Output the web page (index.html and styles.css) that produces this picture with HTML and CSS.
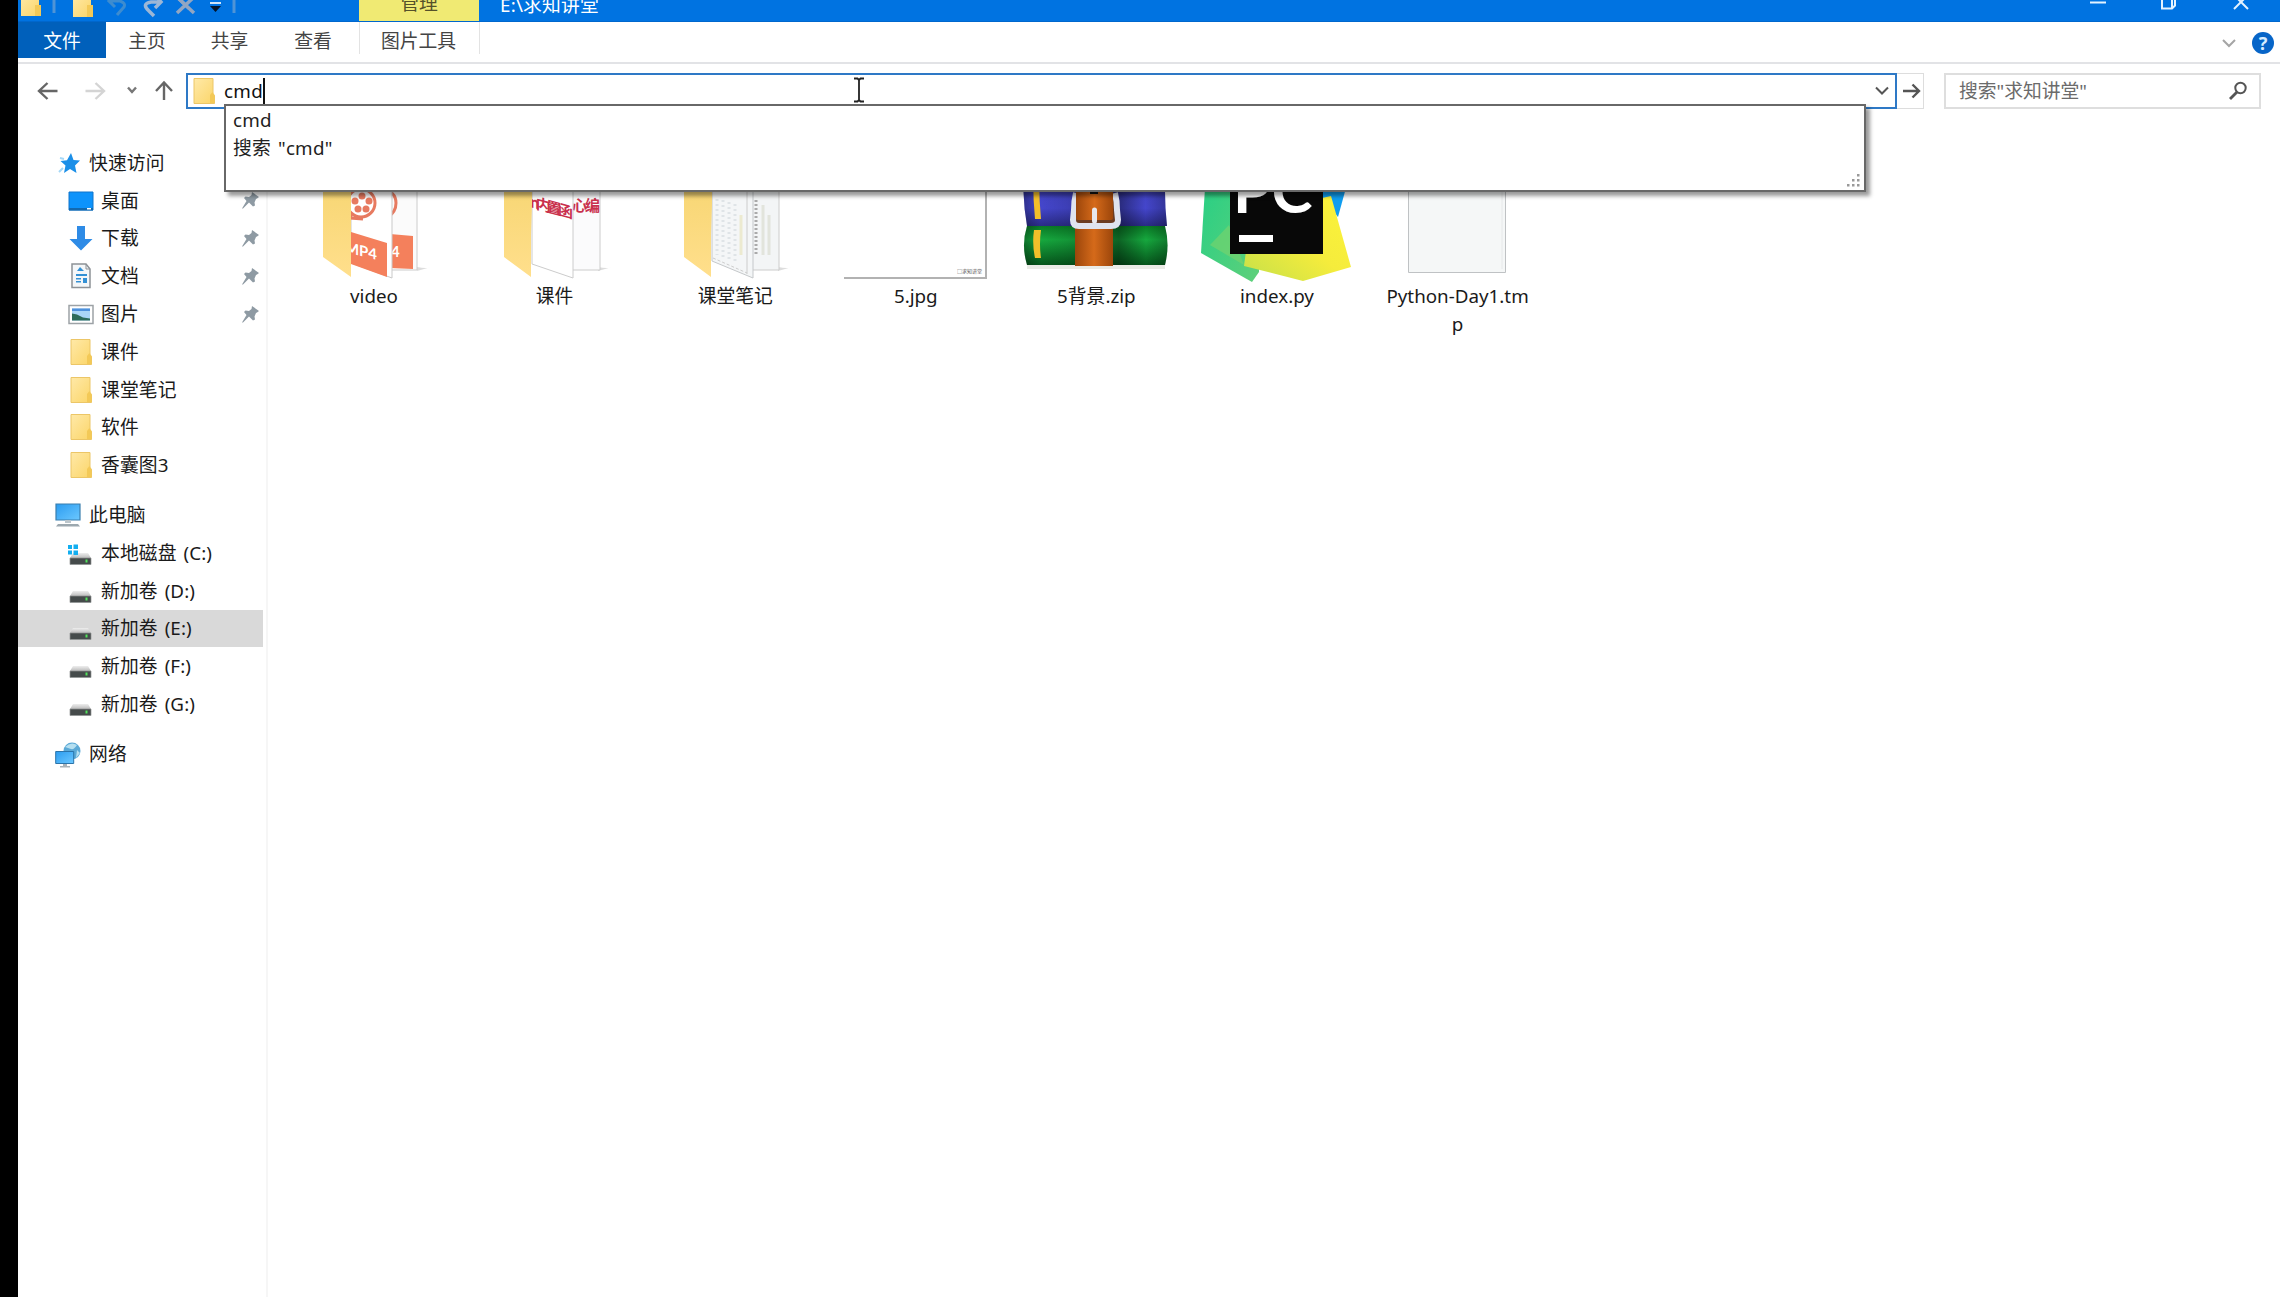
FILE: index.html
```html
<!DOCTYPE html>
<html lang="zh-CN">
<head>
<meta charset="utf-8">
<title>E:\求知讲堂</title>
<link rel="stylesheet" href="styles.css">
</head>
<body>
<svg class="defs" width="0" height="0">
  <defs>
    <linearGradient id="gf" x1="0" x2="1" y1="0" y2="1"><stop offset="0" stop-color="#ffe9a8"/><stop offset="1" stop-color="#fbd568"/></linearGradient>
    <linearGradient id="gcover" x1="0" x2="0" y1="0" y2="1"><stop offset="0" stop-color="#f5d36c"/><stop offset="1" stop-color="#ffdf8c"/></linearGradient>
    <linearGradient id="gscreen" x1="0" x2="1" y1="0" y2="1"><stop offset="0" stop-color="#2b9cf0"/><stop offset="1" stop-color="#6cc8ff"/></linearGradient>
    <linearGradient id="gblue" x1="0" x2="0" y1="0" y2="1"><stop offset="0" stop-color="#4142b8"/><stop offset=".75" stop-color="#4446cc"/><stop offset="1" stop-color="#2a2b86"/></linearGradient>
    <linearGradient id="ggreen" x1="0" x2="0" y1="0" y2="1"><stop offset="0" stop-color="#0a7a26"/><stop offset=".35" stop-color="#16a83e"/><stop offset="1" stop-color="#06561c"/></linearGradient>
    <linearGradient id="gstrap" x1="0" x2="1" y1="0" y2="0"><stop offset="0" stop-color="#9c460b"/><stop offset=".5" stop-color="#d56a1a"/><stop offset="1" stop-color="#9c460b"/></linearGradient>
    <linearGradient id="gshade" x1="0" x2="1" y1="0" y2="0"><stop offset="0" stop-color="#000" stop-opacity=".3"/><stop offset=".12" stop-color="#000" stop-opacity="0"/><stop offset=".3" stop-color="#000" stop-opacity=".1"/><stop offset=".66" stop-color="#000" stop-opacity=".4"/><stop offset=".85" stop-color="#000" stop-opacity="0"/><stop offset="1" stop-color="#000" stop-opacity=".25"/></linearGradient>
    <linearGradient id="gpyg" x1="0" x2="1" y1="0" y2="1"><stop offset="0" stop-color="#21cf86"/><stop offset="1" stop-color="#5fd07a"/></linearGradient>
    <linearGradient id="gpyy" x1="0" x2="1" y1="1" y2="0"><stop offset="0" stop-color="#c5e04a"/><stop offset=".5" stop-color="#f5ec3c"/><stop offset="1" stop-color="#fcf33a"/></linearGradient>
    <linearGradient id="gdrive" x1="0" x2="0" y1="0" y2="1"><stop offset="0" stop-color="#eee"/><stop offset="1" stop-color="#bbb"/></linearGradient>
    <symbol id="folder" viewBox="0 0 22 26"><path d="M1 .5h19v15l1.500 2v8H1z" fill="url(#gf)" stroke="#ecc667"/><path d="M17 25v-8l2-2.500h1l1.500 3v7.500z" fill="#f3c957"/></symbol>
    <symbol id="pin" viewBox="0 0 17 17"><path d="M10 0l7 5-2 1.500-1 .5-1.500 3.500.5 3-2 1L7 10.500 1 16.500H0L4.500 9 2 6l1.500-1.500L7 5l2.500-2z" fill="#8e9aa3"/></symbol>
    <symbol id="drive" viewBox="0 0 26 26"><path d="M5 13h15l3 5H2z" fill="url(#gdrive)"/><path d="M2 18h21v6.500H2z" fill="#454b4b" stroke="#8f9393" stroke-width=".7"/><path d="M17.500 19.500h2v3h-2z" fill="#51e35b"/></symbol>
  </defs>
</svg>
<div class="window">
  <header class="titlebar">
    <div class="quick">
      <svg width="170" height="22" viewBox="0 0 170 22">
        <path d="M3-5h18v21H3z" fill="url(#gf)"/><path d="M17 5h6v11h-6z" fill="#f3c957"/>
        <path d="M36 0v13" stroke="#4f94d6" stroke-width="3"/>
        <path d="M55-5h18v22H55z" fill="url(#gf)"/><path d="M69 5h6v12h-6z" fill="#f3c957"/>
        <path d="M92 1h10q6 2 4 6l-7 8M97-4l-6 5 6 6" stroke="#3d8ccf" stroke-width="3" fill="none"/>
        <path d="M143 2h-10q-10 2-2 9l5 5M138-4l5 6-6 6" stroke="#9cb7d6" stroke-width="3.500" fill="none"/>
        <path d="M159-3l17 16" stroke="#92a6c2" stroke-width="3.500"/>
      </svg>
      <svg class="quick-more" width="60" height="22" viewBox="0 0 60 22">
        <path d="M-11-3L6 13M6-3l-17 16" stroke="#92a6c2" stroke-width="3.500"/>
        <path d="M22 3h11" stroke="#cfe4f7" stroke-width="2"/><path d="M22 6h11l-5.500 6z" fill="#051629"/>
        <path d="M46 0v13" stroke="#4f94d6" stroke-width="3"/>
      </svg>
    </div>
    <div class="manage"><span>管理</span></div>
    <div class="title"><span>E:\求知讲堂</span></div>
    <svg class="controls" width="180" height="22" viewBox="0 0 180 22" fill="none" stroke="#e4f3ff" stroke-width="2">
      <path d="M10 2.500h16M82-4V8.500h10l3-3V-4M85-1h10M92 8v-9M154 9l14-14M168 9L154-5"/>
    </svg>
  </header>
  <nav class="ribbon">
    <div class="tab file">文件</div>
    <div class="tab home">主页</div>
    <div class="tab share">共享</div>
    <div class="tab view">查看</div>
    <div class="tab tools">图片工具</div>
    <svg class="help" width="60" height="41" viewBox="0 0 60 41">
      <path d="M3 18l6 6 6-6" fill="none" stroke="#a5a5a5" stroke-width="2"/>
      <circle cx="43" cy="21" r="11" fill="#0765c8"/>
      <text x="43" y="27.500" text-anchor="middle" class="qmark">?</text>
    </svg>
  </nav>
  <div class="navbar">
    <svg class="arrows" width="168" height="36" viewBox="0 0 168 36" fill="none" stroke-width="2.400">
      <path d="M39.500 18H21M29.500 10l-8.500 8 8.500 8" stroke="#666"/>
      <path d="M67.500 18H86M77.500 10l8.500 8-8.500 8" stroke="#d4d4d4"/>
      <path d="M110 14.500l4 4.500 4-4.500" stroke="#777"/>
      <path d="M146 27V9.500M138 18l8-8.500 8 8.500" stroke="#666"/>
    </svg>
    <div class="address">
      <svg class="folder-icon" width="22" height="26"><use href="#folder"/></svg>
      <span class="typed">cmd</span><span class="caret"></span>
      <svg class="chevron" width="16" height="10" viewBox="0 0 16 10"><path d="M2 1.500l6 6 6-6" fill="none" stroke="#555" stroke-width="2"/></svg>
      <svg class="ibeam" width="12" height="26" viewBox="0 0 12 26"><path d="M1 1.500h3.500L6 3l1.500-1.500H11M6 3v20M1 24.500h3.500L6 23l1.500 1.500H11" fill="none" stroke="#222" stroke-width="1.800"/></svg>
      <div class="suggest">
        <div>cmd</div>
        <div class="wide">搜索 "cmd"</div>
        <svg class="grip" width="14" height="14" viewBox="0 0 14 14" fill="#999"><path d="M0 10h2.500v2.500H0zM5 10h2.500v2.500H5zM10 10h2.500v2.500H10zM5 5h2.500v2.500H5zM10 5h2.500v2.500H10zM10 0h2.500v2.500H10z"/></svg>
      </div>
    </div>
    <div class="go"><svg width="18" height="16" viewBox="0 0 18 16"><path d="M0 8h16M9.500 1.500L16 8l-6.500 6.500" fill="none" stroke="#555" stroke-width="2.400"/></svg></div>
    <div class="search"><span>搜索"求知讲堂"</span>
      <svg width="20" height="20" viewBox="0 0 20 20" fill="none" stroke="#555"><circle cx="12.500" cy="7" r="5.200" stroke-width="2"/><path d="M9 11l-7 7" stroke-width="2.800"/></svg>
    </div>
  </div>
  <main class="body">
    <aside class="tree">
      <div class="row head"><svg width="26" height="26" viewBox="0 0 26 26"><path d="M16 3l2.500 7 6.500.5-5 5 1.500 7.500-6.500-4-6 4 1.500-7.500-5-4.500 6.500-.7z" fill="#1b8fe8"/><path d="M5 8l4 1M4 22l4-4" stroke="#a5d8f7" stroke-width="2"/></svg><span>快速访问</span></div>
      <div class="row"><svg width="26" height="26" viewBox="0 0 26 26"><path d="M1 4h24v18H1z" fill="#0d93fb" stroke="#1075cb"/><path d="M1 20h24v2.500H1z" fill="#1369ae"/><path d="M19 20h4v1.500h-4z" fill="#fff"/></svg><span>桌面</span><svg class="pin" width="17" height="17"><use href="#pin"/></svg></div>
      <div class="row"><svg width="26" height="26" viewBox="0 0 26 26"><path d="M9 1h8v13h7.500L13 25.500 1.500 14H9z" fill="#2e8be6"/></svg><span>下载</span><svg class="pin" width="17" height="17"><use href="#pin"/></svg></div>
      <div class="row"><svg width="26" height="26" viewBox="0 0 26 26"><path d="M4 1h14l4 5v18.500H4z" fill="#f4f7f9" stroke="#8d9297" stroke-width="1.500"/><path d="M18 1v5h4" fill="none" stroke="#8d9297"/><path d="M9 8l3-4 4 4zM8 11h11v2H8zM8 15h5v1.500H8zM15 15h4v5h-4zM8 18h5v1.500H8z" fill="#3491d5"/></svg><span>文档</span><svg class="pin" width="17" height="17"><use href="#pin"/></svg></div>
      <div class="row"><svg width="26" height="26" viewBox="0 0 26 26"><path d="M1 4.500h24v18H1z" fill="#fff" stroke="#9da2a6" stroke-width="1.500"/><path d="M4 7.500h18v12H4z" fill="#a9d5f6"/><path d="M4 7.500h18v2.500H4z" fill="#4e91dc"/><path d="M4 19.500v-7l5 1 6 3 7 1v2z" fill="#2c6b5a"/></svg><span>图片</span><svg class="pin" width="17" height="17"><use href="#pin"/></svg></div>
      <div class="row"><svg class="fold" width="22" height="26"><use href="#folder"/></svg><span>课件</span></div>
      <div class="row"><svg class="fold" width="22" height="26"><use href="#folder"/></svg><span>课堂笔记</span></div>
      <div class="row"><svg class="fold" width="22" height="26"><use href="#folder"/></svg><span>软件</span></div>
      <div class="row"><svg class="fold" width="22" height="26"><use href="#folder"/></svg><span>香囊图3</span></div>
      <div class="row head gap"><svg width="26" height="26" viewBox="0 0 26 26"><path d="M1 2h24v16H1z" fill="url(#gscreen)" stroke="#3b7fae" stroke-width="1.200"/><path d="M10 18h6v3h-6z" fill="#bcc6cc"/><path d="M3 22h20l2 2.500H1z" fill="#9ca8af"/></svg><span>此电脑</span></div>
      <div class="row"><svg width="26" height="26" viewBox="0 0 26 26"><use href="#drive"/><path d="M0 5h4v4H0zM5.500 4.500H10V9H5.500zM0 10.500h4v4H0zM5.500 10.500H10V15H5.500z" fill="#12aef0"/></svg><span>本地磁盘 (C:)</span></div>
      <div class="row"><svg width="26" height="26"><use href="#drive"/></svg><span>新加卷 (D:)</span></div>
      <div class="row selected"><svg width="26" height="26"><use href="#drive"/></svg><span>新加卷 (E:)</span></div>
      <div class="row"><svg width="26" height="26"><use href="#drive"/></svg><span>新加卷 (F:)</span></div>
      <div class="row"><svg width="26" height="26"><use href="#drive"/></svg><span>新加卷 (G:)</span></div>
      <div class="row head gap"><svg width="26" height="26" viewBox="0 0 26 26"><circle cx="17" cy="10" r="8.500" fill="#5ba9d6"/><path d="M10 6q6-6 12-2-3 5-6 4zM22 9l3 3-4 5z" fill="#b5dff0"/><path d="M.7 10.500h18v12H.7z" fill="url(#gscreen)" stroke="#2b74aa"/><path d="M8 23h4v2h3v1.500H5V25h3z" fill="#a9b2b8"/></svg><span>网络</span></div>
    </aside>
    <section class="files">
      <figure><svg width="150" height="127" viewBox="0 0 150 127">
        <path d="M118 112q10 2 14 0l-14 4z" fill="#ddd"/>
        <path d="M90 20h28v95H90z" fill="#fbfbfb" stroke="#ccc"/><path d="M91 79l23 2v33l-23-1z" fill="#f4805c"/><path d="M82 34q15 2 15 14 0 9-8 14" fill="none" stroke="#e77a60" stroke-width="3"/>
        <text class="mp4" x="92" y="102">4</text>
        <path d="M52 0l41 10v113l-41-15z" fill="#fff" stroke="#c9c9c9"/><path d="M52 77l36 11v34L52 109z" fill="#f4805c"/>
        <circle cx="62" cy="48" r="14" fill="#fff" stroke="#e77a60" stroke-width="3"/><path d="M52 58v5l12 1" fill="none" stroke="#e77a60" stroke-width="3"/><g fill="#e77a60"><circle cx="63" cy="41" r="3.500"/><circle cx="56" cy="46" r="3.500"/><circle cx="59" cy="54" r="3.500"/><circle cx="67" cy="54" r="3.500"/><circle cx="70" cy="46" r="3.500"/></g>
        <text class="mp4" transform="translate(46 97) skewY(14)" x="0" y="0" textLength="32">MP4</text>
        <path d="M24 0h28v122L24 102z" fill="url(#gcover)"/></svg><figcaption>video</figcaption></figure>
      <figure><svg width="150" height="127" viewBox="0 0 150 127">
        <path d="M118 112q10 2 14 0l-14 4z" fill="#ddd"/>
        <path d="M90 0h30v115H90z" fill="#fbfbfc" stroke="#ccc"/><text class="red" x="92" y="56" textLength="28">心编</text>
        <path d="M52 0l41 10v113l-41-14z" fill="#fff" stroke="#ccc"/><text class="red" transform="translate(50 52) skewY(15)" textLength="43">n内置函</text>
        <path d="M24 0h28v49l-1 30v43l-27-20z" fill="url(#gcover)"/></svg><figcaption>课件</figcaption></figure>
      <figure><svg width="150" height="127" viewBox="0 0 150 127">
        <path d="M118 112q10 2 14 0l-14 4z" fill="#ddd"/>
        <path d="M90 0h29v115H90z" fill="#f3f5f6" stroke="#ccc"/><path d="M96 45v55" stroke="#aaa" stroke-dasharray="2 2" stroke-width="3"/><path d="M103 50v50M109 60v40" stroke="#e2e4dc" stroke-width="3"/>
        <path d="M52 0l41 10v113l-41-17z" fill="#f4f6f7" stroke="#c5c8ca"/><path d="M57 44v56M63 45v58M69 47v58M75 49v60" stroke="#dfe4e7" stroke-dasharray="2 3" stroke-width="3"/><path d="M81 60v40" stroke="#ecead0" stroke-width="3"/><path d="M87 10v109" stroke="#ccc"/><path d="M53 103l34 15" stroke="#ccc" stroke-dasharray="3 2"/>
        <path d="M24 0h28v49l-1 30v43l-27-20z" fill="url(#gcover)"/></svg><figcaption>课堂笔记</figcaption></figure>
      <figure><svg width="150" height="127" viewBox="0 0 150 127"><path d="M2 0h143v123H2z" fill="#fff"/><path d="M145 0v123H3" fill="none" stroke="#b2b2b2" stroke-width="2"/><text class="tiny" x="116" y="118">□求知讲堂</text></svg><figcaption>5.jpg</figcaption></figure>
      <figure><svg width="150" height="127" viewBox="0 0 150 127">
        <path d="M6 110h138v4H6z" fill="#eaebe6"/>
        <path d="M4 0h142q-4 36 0 71H6q-6-33-2-71z" fill="url(#gblue)"/><path d="M4 0h142q-4 36 0 71H6q-6-33-2-71z" fill="url(#gshade)"/>
        <path d="M6 71h138q5 19 0 39H6q-6-20 0-39z" fill="url(#ggreen)"/><path d="M6 71h138q5 19 0 39H6q-6-20 0-39z" fill="url(#gshade)"/>
        <path d="M13 0h6q-2 34 1 64h-6q-3-31-1-64zM13 75h7q-2 14 0 28h-6q-3-14-1-28z" fill="#f3bf2a"/>
        <path d="M54 70h38v41H54z" fill="url(#gstrap)"/>
        <path d="M55 38q-2 8-2 17l-1 10q0 6 6 6h32q7 0 7-6l-1-10q0-9-2-17" fill="#6b3c22" stroke="#dfe3ee" stroke-width="6"/>
        <path d="M55 20h37v43q0 2-3 2H58q-3 0-3-2z" fill="url(#gstrap)"/><path d="M73.500 55v11" stroke="#e8e8ec" stroke-width="5" stroke-linecap="round"/><path d="M69 36h8v3h-8z" fill="#111"/></svg><figcaption>5背景.zip</figcaption></figure>
      <figure><svg width="150" height="127" viewBox="0 0 150 127">
        <path d="M120 0h33l-17 62-16-20z" fill="#0f9df0"/><path d="M5 0h52v117l-7 10L-1 98z" fill="url(#gpyg)"/><path d="M27 70L8 90l34 20z" fill="#7bd36a" opacity=".6"/><path d="M120 43l9-2 20 71-48 14-59-15 2-15z" fill="url(#gpyy)"/>
        <path d="M28 8h93v91H28z" fill="#080808"/><text class="pc" x="31" y="58">PC</text><path d="M37 80h34v7H37z" fill="#fff"/></svg><figcaption>index.py</figcaption></figure>
      <figure><svg width="150" height="127" viewBox="0 0 150 127"><path d="M25.500 0h97v117.500h-97z" fill="#f5f7f7" stroke="#bfc2c4"/><path d="M119 0v114" stroke="#e6e8e9"/></svg><figcaption>Python-Day1.tm<br>p</figcaption></figure>
    </section>
  </main>
</div>
</body>
</html>
```
FILE: styles.css
```css
* { box-sizing: border-box; }
body { margin: 0; background: #000; font: 18.8px/28px "Noto Sans", "Noto Sans CJK SC", sans-serif; color: #1a1a1a; overflow: hidden; }
.defs { display: block; position: absolute; }
svg { flex: none; overflow: visible; }
.window { margin-left: 18px; height: 1297px; background: #fff; display: flex; flex-direction: column; overflow: hidden; }
.titlebar { height: 22px; background: #0073e1; display: flex; overflow: hidden; flex: none; border-bottom: 1px solid #0067cd; }
.quick { width: 341px; display: flex; }
.quick svg:first-child { overflow: hidden; }
.manage { width: 120px; height: 22px; background: #f0ea73; text-align: center; color: #55512a; }
.manage span, .title span { display: block; margin-top: -11px; }
.title span { margin-top: -9px; letter-spacing: .2px; }
.title { flex: 1; padding-left: 21px; color: #fff; }
.controls { margin-right: 20px; }
.ribbon { height: 42px; display: flex; flex: none; border-bottom: 2px solid #e2e3e6; color: #444; }
.tab { width: 83px; height: 36px; line-height: 39px; text-align: center; }
.file { width: 88px; background: #0060bb; color: #fff; }
.home { width: 82px; }
.view { width: 84px; margin-right: 4px; }
.tools { width: 121px; border: solid #e3e3e3; border-width: 0 1px; height: 32px; padding-right: 2px; }
.help { margin-left: auto; margin-right: 0; }
.qmark { font: bold 18px "Noto Sans", sans-serif; fill: #d7edff; }
.navbar { height: 36px; margin-top: 9px; display: flex; flex: none; position: relative; z-index: 2; }
.address { width: 1711px; border: 2px solid #2e79c6; display: flex; align-items: center; padding: 0 9px 0 5px; position: relative; }
.typed { margin-left: 9px; color: #111; letter-spacing: .3px; }
.caret { width: 2px; height: 26px; background: #111; }
.chevron { margin-left: auto; margin-right: -4px; }
.ibeam { position: absolute; left: 665px; top: 2px; }
.suggest { position: absolute; left: 36px; top: 29px; width: 1642px; height: 88px; background: #fff; border: 2px solid #686868; box-shadow: 4px 4px 4px rgba(0,0,0,.4); padding: 0 7px; color: #222; letter-spacing: .2px; }
.wide { word-spacing: 2px; }
.grip { position: absolute; right: 3px; bottom: 2px; }
.go { width: 27px; border: 1px solid #ddd; border-left: 0; display: flex; align-items: center; justify-content: center; padding-left: 3px; }
.search { margin-left: 20px; width: 317px; border: 2px solid #dedede; display: flex; align-items: center; justify-content: space-between; padding: 0 11px 0 13px; color: #6b6b6b; }
.body { flex: 1; display: flex; }
.tree { width: 250px; padding-top: 35px; border-right: 2px solid #f6f6f6; }
.row { height: 37.8px; width: 245px; padding-left: 50px; display: flex; align-items: center; }
.row span { margin-left: 7px; white-space: pre; word-spacing: 2px; letter-spacing: .1px; }
.head { padding-left: 37px; }
.row.head span { margin-left: 8px; }
.gap { margin-top: 12px; }
.fold { margin-left: 2px; margin-right: 2px; }
.pin { margin-left: auto; margin-right: 4px; }
.selected { background: #d9d9d9; }
.files { display: flex; align-items: flex-start; padding-left: 31px; padding-top: 46px; }
figure { margin: 0 30.6px 0 0; width: 150px; text-align: center; }
figure svg { display: block; }
figcaption { white-space: nowrap; }
.mp4 { font: bold 15px Lato, sans-serif; fill: #fff; }
.red { font: bold 15px "Noto Sans CJK SC", sans-serif; fill: #c9304d; }
.tiny { font: 5px "Noto Sans CJK SC", sans-serif; fill: #555; }
.pc { font: bold 62px Lato, sans-serif; fill: #fff; }
```
